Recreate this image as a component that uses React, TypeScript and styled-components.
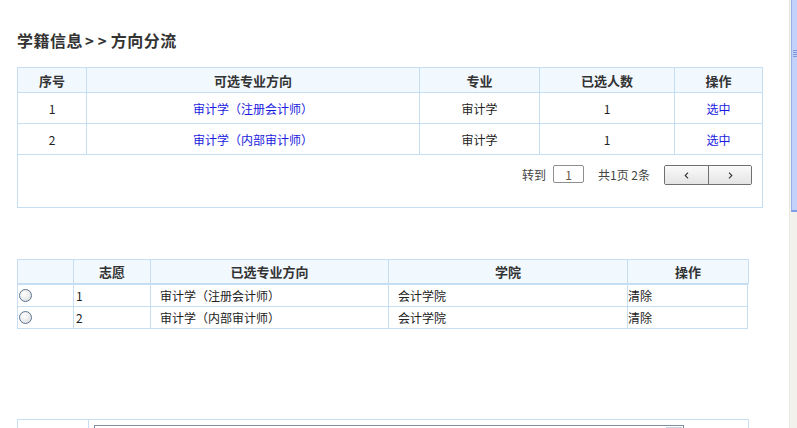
import React from "react";
import styled, { createGlobalStyle } from "styled-components";

const BORDER = "#c6def4";
const HEAD_BG = "#f1f8fe";

const GlobalStyle = createGlobalStyle`
  html, body { margin: 0; padding: 0; background: #fff; }
  body {
    font-family: "Noto Sans CJK SC", "Noto Sans", sans-serif;
    font-size: 12px;
    color: #222;
  }
  * { box-sizing: border-box; }
`;

const Page = styled.div`
  display: flex;
  height: 428px;
  overflow: hidden;
`;

const Main = styled.main`
  flex: 1;
  min-width: 0;
  padding: 30px 0 0 17px;
`;

const Title = styled.h1`
  margin: 0;
  height: 20px;
  line-height: 20px;
  font-size: 16px;
  font-weight: bold;
  color: #333;
  letter-spacing: 0.5px;
  white-space: nowrap;
`;

const Arrows = styled.span`
  letter-spacing: 4px;
  margin-left: 2px;
  font-size: 15px;
`;

const Table = styled.div<{ $width: number; $mt: number }>`
  width: ${(p) => p.$width}px;
  margin-top: ${(p) => p.$mt}px;
  border-left: 1px solid ${BORDER};
  border-top: 1px solid ${BORDER};
`;

const Row = styled.div<{ $cols: string; $h: number; $head?: boolean }>`
  display: grid;
  grid-template-columns: ${(p) => p.$cols};
  height: ${(p) => p.$h}px;
  background: ${(p) => (p.$head ? HEAD_BG : "#fff")};
`;

const Cell = styled.div<{ $align?: "left" | "center"; $pad?: number; $head?: boolean; $link?: boolean }>`
  display: flex;
  align-items: center;
  justify-content: ${(p) => (p.$align === "left" ? "flex-start" : "center")};
  padding-left: ${(p) => p.$pad ?? 0}px;
  border-right: 1px solid ${BORDER};
  border-bottom: 1px solid ${BORDER};
  font-size: ${(p) => (p.$head ? 13 : 12)}px;
  font-weight: ${(p) => (p.$head ? "bold" : "normal")};
  color: ${(p) => (p.$head ? "#333" : p.$link ? "#1a1ae0" : "#222")};
  white-space: nowrap;
  overflow: hidden;
`;

const Link = styled.a`
  color: #1a1ae0;
  text-decoration: none;
  cursor: pointer;
`;

const Pager = styled.div`
  display: flex;
  justify-content: flex-end;
  align-items: flex-start;
  height: 53px;
  padding: 10px 10px 0 0;
  border-right: 1px solid ${BORDER};
  border-bottom: 1px solid ${BORDER};
  color: #444;
  font-size: 12px;
`;

const PagerText = styled.span<{ $ml?: number }>`
  line-height: 19px;
  margin-left: ${(p) => p.$ml ?? 0}px;
  white-space: nowrap;
`;

const PageInput = styled.input`
  width: 31px;
  height: 18px;
  margin: 0 0 0 7px;
  padding: 0;
  border: 1px solid #8f8f8f;
  border-radius: 2px;
  text-align: center;
  font-family: inherit;
  font-size: 12px;
  color: #6b5a45;
  outline: none;
`;

const BtnGroup = styled.div`
  display: flex;
  margin-left: 14px;
  border: 1px solid #707070;
  border-radius: 2px;
  overflow: hidden;
`;

const PageBtn = styled.button<{ $first?: boolean }>`
  width: 43px;
  height: 18px;
  padding: 0;
  border: none;
  border-left: ${(p) => (p.$first ? "none" : "1px solid #707070")};
  background: linear-gradient(#fafafa, #e4e4e4);
  display: flex;
  align-items: center;
  justify-content: center;
  cursor: pointer;
`;

const Radio = styled.span`
  width: 13px;
  height: 13px;
  margin-left: 1px;
  border-radius: 50%;
  border: 1px solid #5d7592;
  background: radial-gradient(circle at 40% 35%, #ffffff 0%, #eeeeee 45%, #cfd3d8 100%);
`;

const Form = styled.div`
  width: 732px;
  margin-top: 90px;
  border-left: 1px solid ${BORDER};
  border-top: 1px solid ${BORDER};
  display: grid;
  grid-template-columns: 71px 660px;
  height: 40px;
`;

const FormCell = styled.div`
  border-right: 1px solid ${BORDER};
  padding: 5px 0 0 5px;
`;

const SelectBox = styled.div`
  width: 590px;
  height: 24px;
  border: 1px solid #7f8fa3;
  border-bottom: none;
  display: flex;
  justify-content: flex-end;
  padding: 1px 1px 0 0;
`;

const SelectArrow = styled.div`
  width: 16px;
  height: 22px;
  border: 1px solid #c9d3de;
  background: linear-gradient(#f4f6f9, #dfe5ec);
`;

const Scrollbar = styled.div`
  flex: none;
  width: 8px;
  background: #f3f1eb;
  border-left: 1px solid #e9e7e1;
  display: flex;
  flex-direction: column;
`;

const Thumb = styled.div`
  margin-left: 1px;
  height: 212px;
  background: #c2d2fb;
  border-left: 1px solid #98afea;
  border-bottom: 2px solid #7f9ee8;
  display: flex;
  flex-direction: column;
  align-items: center;
  padding-top: 50px;
  gap: 1px;
`;

const Grip = styled.span`
  width: 4px;
  height: 1px;
  background: #7d97d8;
`;

const Chevron = ({ dir }: { dir: "left" | "right" }) => (
  <svg width="5" height="7" viewBox="0 0 5 7">
    <path
      d={dir === "left" ? "M4 0.7 L1.2 3.5 L4 6.3" : "M1 0.7 L3.8 3.5 L1 6.3"}
      fill="none"
      stroke="#333"
      strokeWidth="1.1"
    />
  </svg>
);

const T1_COLS = "69px 333px 120px 135px 88px";
const T2_HEAD_COLS = "56px 77px 238px 239px 121px";
const T2_BODY_COLS = "56px 77px 238px 239px 120px";

const options = [
  { no: 1, name: "审计学（注册会计师）", major: "审计学", count: 1 },
  { no: 2, name: "审计学（内部审计师）", major: "审计学", count: 1 },
];

const chosen = [
  { no: 1, name: "审计学（注册会计师）", college: "会计学院" },
  { no: 2, name: "审计学（内部审计师）", college: "会计学院" },
];

export default function App() {
  return (
    <>
      <GlobalStyle />
      <Page>
        <Main>
          <Title>
            学籍信息<Arrows>&gt;&gt;</Arrows>方向分流
          </Title>

          <Table $width={746} $mt={17}>
            <Row $cols={T1_COLS} $h={25} $head>
              <Cell $head>序号</Cell>
              <Cell $head>可选专业方向</Cell>
              <Cell $head>专业</Cell>
              <Cell $head>已选人数</Cell>
              <Cell $head>操作</Cell>
            </Row>
            {options.map((o) => (
              <Row key={o.no} $cols={T1_COLS} $h={31}>
                <Cell>{o.no}</Cell>
                <Cell $link>
                  <Link>{o.name}</Link>
                </Cell>
                <Cell>{o.major}</Cell>
                <Cell>{o.count}</Cell>
                <Cell $link>
                  <Link>选中</Link>
                </Cell>
              </Row>
            ))}
            <Pager>
              <PagerText>转到</PagerText>
              <PageInput defaultValue="1" />
              <PagerText $ml={14}>共1页 2条</PagerText>
              <BtnGroup>
                <PageBtn $first aria-label="上一页">
                  <Chevron dir="left" />
                </PageBtn>
                <PageBtn aria-label="下一页">
                  <Chevron dir="right" />
                </PageBtn>
              </BtnGroup>
            </Pager>
          </Table>

          <Table $width={732} $mt={51}>
            <Row $cols={T2_HEAD_COLS} $h={24} $head>
              <Cell $head></Cell>
              <Cell $head>志愿</Cell>
              <Cell $head>已选专业方向</Cell>
              <Cell $head>学院</Cell>
              <Cell $head>操作</Cell>
            </Row>
          </Table>
          <Table $width={731} $mt={0}>
            {chosen.map((c) => (
              <Row key={c.no} $cols={T2_BODY_COLS} $h={22}>
                <Cell $align="left">
                  <Radio />
                </Cell>
                <Cell $align="left" $pad={2}>
                  {c.no}
                </Cell>
                <Cell $align="left" $pad={9}>
                  {c.name}
                </Cell>
                <Cell $align="left" $pad={9}>
                  {c.college}
                </Cell>
                <Cell $align="left">清除</Cell>
              </Row>
            ))}
          </Table>

          <Form>
            <FormCell />
            <FormCell>
              <SelectBox>
                <SelectArrow />
              </SelectBox>
            </FormCell>
          </Form>
        </Main>
        <Scrollbar>
          <Thumb>
            <Grip />
            <Grip />
            <Grip />
            <Grip />
          </Thumb>
        </Scrollbar>
      </Page>
    </>
  );
}
